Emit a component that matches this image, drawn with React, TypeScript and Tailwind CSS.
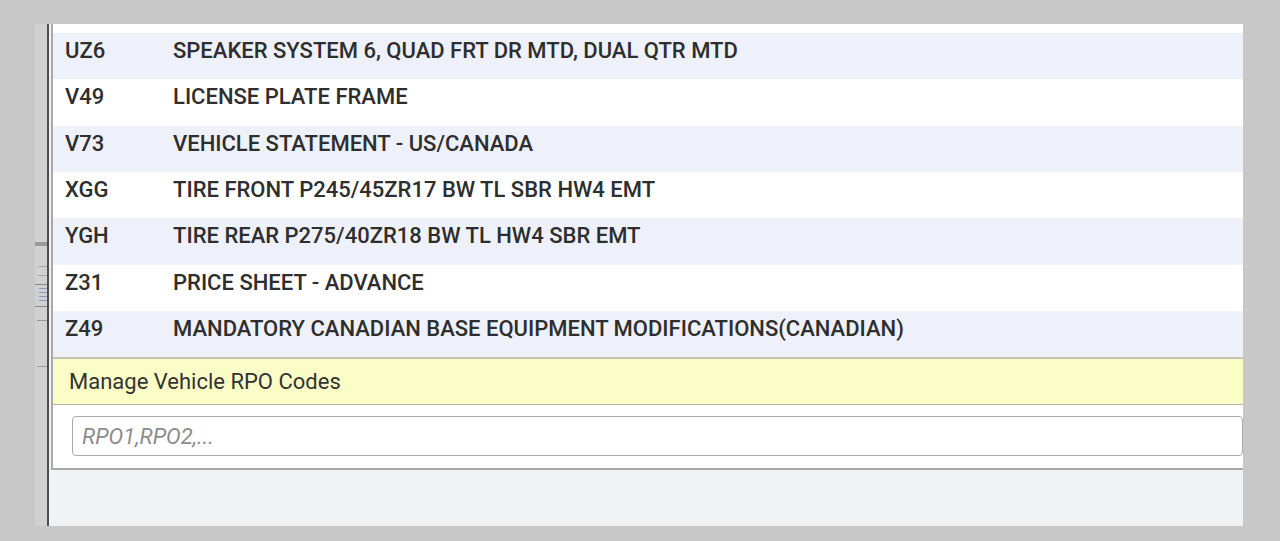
import React from "react";

const rows: [string, string][] = [
  ["UZ6", "SPEAKER SYSTEM 6, QUAD FRT DR MTD, DUAL QTR MTD"],
  ["V49", "LICENSE PLATE FRAME"],
  ["V73", "VEHICLE STATEMENT - US/CANADA"],
  ["XGG", "TIRE FRONT P245/45ZR17 BW TL SBR HW4 EMT"],
  ["YGH", "TIRE REAR P275/40ZR18 BW TL HW4 SBR EMT"],
  ["Z31", "PRICE SHEET - ADVANCE"],
  ["Z49", "MANDATORY CANADIAN BASE EQUIPMENT MODIFICATIONS(CANADIAN)"],
];

export default function App() {
  return (
    <div
      className="w-[1280px] h-[541px] bg-[#c8c8c8] pt-[24px] pl-[35px] flex items-start overflow-hidden"
      style={{ fontFamily: "Roboto, 'Liberation Sans', sans-serif" }}
    >
      {/* left ruler strip */}
      <div className="w-[12px] h-[502px] bg-[#d1d1d1] flex flex-col">
        <div className="h-[218px]" />
        <div className="h-[4px] bg-[#9a9a9a]" />
        <div className="h-[20px]" />
        <div className="h-[1px] bg-[#a5a5a5] ml-[3px]" />
        <div className="h-[8px]" />
        <div className="h-[1px] bg-[#a5a5a5] ml-[3px]" />
        <div className="h-[8px]" />
        <div className="h-[1px] bg-[#8a8a8a]" />
        <div className="h-[3px]" />
        <div className="h-[1px] bg-[#8f9bc9] ml-[4px]" />
        <div className="h-[3px]" />
        <div className="h-[1px] bg-[#8f9bc9] ml-[4px]" />
        <div className="h-[3px]" />
        <div className="h-[1px] bg-[#8f9bc9] ml-[4px]" />
        <div className="h-[3px]" />
        <div className="h-[1px] bg-[#8f9bc9] ml-[4px]" />
        <div className="h-[5px]" />
        <div className="h-[1px] bg-[#8a8a8a]" />
        <div className="h-[13px]" />
        <div className="h-[1px] bg-[#9a9a9a] ml-[2px]" />
        <div className="h-[45px]" />
        <div className="h-[1px] bg-[#9a9a9a] ml-[2px]" />
      </div>
      {/* dark divider */}
      <div className="w-[2px] h-[502px] bg-[#4d4d4d]" />
      {/* main area */}
      <div className="w-[1194px] h-[502px] bg-[#f1f2f4] pl-[2px] flex flex-col">
        <div className="h-[446px] bg-white border-l-2 border-b-2 border-[#a9a9a9] flex flex-col">
          <div className="h-[9px] shrink-0" />
          {rows.map(([code, desc], i) => (
            <div
              key={code}
              className={`h-[46.33px] shrink-0 flex items-center pb-[11px] text-[22px] font-medium text-[#2e2e2e] whitespace-nowrap ${
                i % 2 === 0 ? "bg-[#eef1f9]" : "bg-white"
              }`}
            >
              <span className="w-[120px] pl-[12px] shrink-0">{code}</span>
              <span>{desc}</span>
            </div>
          ))}
          <div className="h-[2px] bg-[#c4c4b4] shrink-0" />
          <div className="h-[46px] shrink-0 bg-[#fbfdc7] border-b border-[#b8b8a8] flex items-center pl-[16px] text-[22px] text-[#333]">
            Manage Vehicle RPO Codes
          </div>
          <div className="pt-[11px] pl-[19px] shrink-0">
            <div className="h-[40px] border border-[#a8a8a8] rounded-[4px] bg-white flex items-center pl-[9px] text-[22px] italic text-[#8c8c8c]">
              RPO1,RPO2,...
            </div>
          </div>
        </div>
      </div>
    </div>
  );
}
